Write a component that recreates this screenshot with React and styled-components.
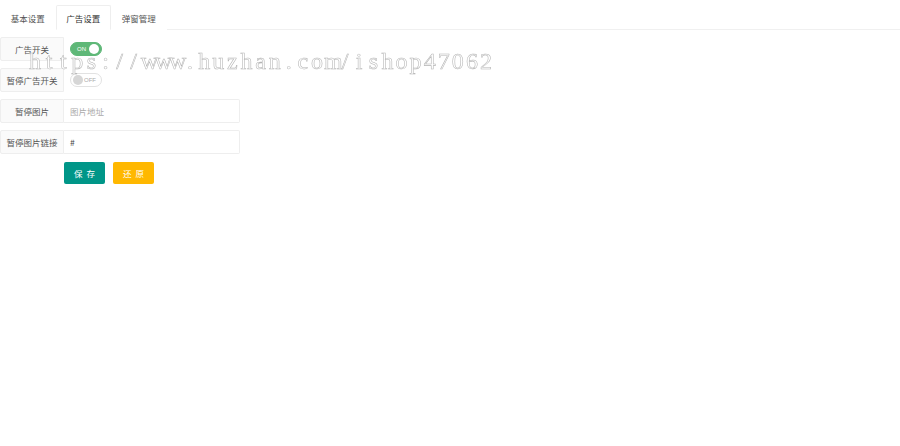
import React from 'react';
import styled, { createGlobalStyle } from 'styled-components';

const GlobalStyle = createGlobalStyle`
  html, body {
    margin: 0;
    padding: 0;
    background: #fff;
  }
  body {
    font-family: "Noto Sans CJK SC", "Noto Sans", sans-serif;
    color: #666;
  }
`;

const Page = styled.div`
  position: relative;
  width: 900px;
  height: 446px;
  overflow: hidden;
`;

const TabBar = styled.ul`
  display: flex;
  align-items: flex-end;
  height: 29px;
  margin: 0;
  padding: 0;
  list-style: none;
  border-bottom: 1px solid #f0f0f0;
`;

const Tab = styled.li`
  display: flex;
  align-items: center;
  justify-content: center;
  box-sizing: border-box;
  width: 55.5px;
  height: 25px;
  margin-bottom: -1px;
  font-size: 8.5px;
  color: ${p => (p.$active ? '#333' : '#555')};
  background: #fff;
  border: 1px solid ${p => (p.$active ? '#eee' : 'transparent')};
  border-bottom-color: ${p => (p.$active ? '#fff' : 'transparent')};
  border-radius: 2px 2px 0 0;
`;

const Form = styled.div`
  display: flex;
  flex-direction: column;
  gap: 7px;
  padding-top: 7px;
`;

const Row = styled.div`
  display: flex;
  align-items: center;
  height: 24px;
`;

const Label = styled.div`
  display: flex;
  align-items: center;
  justify-content: center;
  box-sizing: border-box;
  width: 64px;
  height: 24px;
  font-size: 8.5px;
  color: #555;
  white-space: nowrap;
  background: #fafafa;
  border: 1px solid #eee;
  border-radius: 2px 0 0 2px;
`;

const Input = styled.div`
  display: flex;
  align-items: center;
  box-sizing: border-box;
  width: 176px;
  height: 24px;
  padding-left: 6px;
  font-size: 8.5px;
  color: ${p => (p.$placeholder ? '#aaa' : '#444')};
  background: #fff;
  border: 1px solid #eee;
  border-left: none;
  border-radius: 0 2px 2px 0;
`;

const Switch = styled.div`
  display: flex;
  align-items: center;
  justify-content: space-between;
  flex-direction: ${p => (p.$on ? 'row' : 'row-reverse')};
  box-sizing: border-box;
  width: 32px;
  height: 14px;
  margin-left: 6px;
  padding-left: ${p => (p.$on ? '6px' : '2px')};
  padding-right: ${p => (p.$on ? '2px' : '5px')};
  border-radius: 7px;
  background: ${p => (p.$on ? '#5fb878' : '#fff')};
  border: 1px solid ${p => (p.$on ? '#5fb878' : '#e2e2e2')};
`;

const SwitchText = styled.span`
  font-family: "Liberation Sans", Arial, sans-serif;
  font-size: 6px;
  color: ${p => (p.$on ? '#fff' : '#aaa')};
`;

const Knob = styled.span`
  width: 10px;
  height: 10px;
  border-radius: 50%;
  background: ${p => (p.$on ? '#fff' : '#d6d6d6')};
`;

const Actions = styled.div`
  display: flex;
  gap: 8px;
  padding-left: 64px;
  padding-top: 1px;
`;

const Button = styled.button`
  box-sizing: border-box;
  width: 41px;
  height: 22px;
  padding: 0;
  border: none;
  border-radius: 2px;
  font-family: "Noto Sans CJK SC", sans-serif;
  font-size: 8.5px;
  letter-spacing: 4px;
  text-indent: 4px;
  color: #fff;
  background: ${p => p.$color};
`;

const Watermark = styled.div`
  position: absolute;
  left: 28px;
  top: 49px;
  display: flex;
  font-family: "Liberation Serif", "Times New Roman", serif;
  font-size: 24px;
  line-height: 1;
  white-space: nowrap;
  color: #fff;
  -webkit-text-stroke: 0.55px #b0b0b0;
  opacity: 0.95;
  transform: translateZ(0);
  pointer-events: none;
`;

const Cell = styled.span`
  display: inline-block;
  width: 14.1px;
  text-align: center;
`;

const mark = 'https://www.huzhan.com/ishop47062';

const App = () => (
  <Page>
    <GlobalStyle />
    <TabBar>
      <Tab>基本设置</Tab>
      <Tab $active>广告设置</Tab>
      <Tab>弹窗管理</Tab>
    </TabBar>
    <Form>
      <Row>
        <Label>广告开关</Label>
        <Switch $on>
          <SwitchText $on>ON</SwitchText>
          <Knob $on />
        </Switch>
      </Row>
      <Row>
        <Label>暂停广告开关</Label>
        <Switch>
          <SwitchText>OFF</SwitchText>
          <Knob />
        </Switch>
      </Row>
      <Row>
        <Label>暂停图片</Label>
        <Input $placeholder>图片地址</Input>
      </Row>
      <Row>
        <Label>暂停图片链接</Label>
        <Input>#</Input>
      </Row>
      <Actions>
        <Button $color="#009688">保存</Button>
        <Button $color="#ffb800">还原</Button>
      </Actions>
    </Form>
    <Watermark>
      {mark.split('').map((ch, i) => (
        <Cell key={i}>{ch}</Cell>
      ))}
    </Watermark>
  </Page>
);

export default App;
